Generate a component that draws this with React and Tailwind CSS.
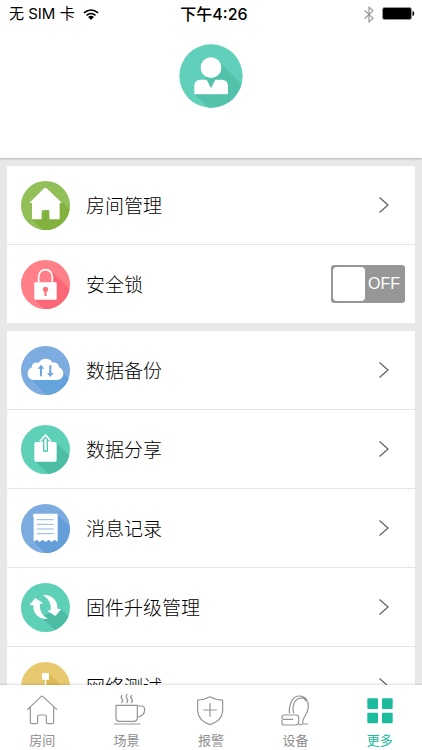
import React, { useState } from "react";

function Disc({ color, shade, id, shadow, children }) {
  return (
    <svg viewBox="0 0 147 147" className="size-[49px] shrink-0" aria-hidden="true">
      <clipPath id={id}>
        <circle cx="73.5" cy="73.5" r="73.5" />
      </clipPath>
      <circle cx="73.5" cy="73.5" r="73.5" fill={color} />
      <path d={shadow} fill={shade} clipPath={`url(#${id})`} />
      {children}
    </svg>
  );
}

const HouseDisc = () => (
  <Disc id="house" color="#93bf58" shade="#82b13d" shadow="M33 115L80 162H170V108L122 62Z">
    <path d="M69 22q4-4 8 0L123 66H116V112q0 3-3 3H85V90q0-3-3-3H65q-3 0-3 3V115H36q-3 0-3-3V66H25Z" fill="#fff" />
  </Disc>
);

const LockDisc = () => (
  <Disc id="lock" color="#ff8088" shade="#fb6776" shadow="M41 118L85 162H170V110L92 34L96 67Z">
    <path d="M53 68V49.500a20.500 20.500 0 0 1 41 0V68" fill="none" stroke="#fff" strokeWidth="5" />
    <rect x="40" y="67" width="67" height="52" rx="2" fill="#fff" />
    <circle cx="73.500" cy="88" r="8" fill="#ff727e" />
    <path d="M71 92h5l1 16h-7Z" fill="#ff727e" />
  </Disc>
);

const CloudDisc = () => (
  <Disc id="cloud" color="#7cace0" shade="#64a3dc" shadow="M27 97L92 162H170V124L124 78Z">
    <path d="M39 102C28 102 20 94 20 83C20 73 26 66 33 64C31 53 43 46 52 51C61 34 87 34 95 50C106 48 114 55 114 64C121 66 127 73 127 83C127 94 118 102 107 102Z" fill="#fff" />
    <g fill="#6fa5dc">
      <path d="M60 56L70 68H63V91H57V68H50Z" />
      <path d="M88 93L78 81H85V58H91V81H98Z" />
    </g>
  </Disc>
);

const ShareDisc = () => (
  <Disc id="share" color="#5fd0b8" shade="#4bbda5" shadow="M42 108L92 158H170V114L107 54Z">
    <rect x="40" y="51" width="67" height="59" rx="5" fill="#fff" />
    <path d="M73.500 28L91 48H82V53H65V48H56Z" fill="#fff" stroke="#fff" strokeWidth="3" strokeLinejoin="round" />
    <path d="M73.500 37L82 46H79V78H68V46H65Z" fill="#fff" stroke="#55c8b0" strokeWidth="4" />
  </Disc>
);

const ReceiptDisc = () => (
  <Disc id="receipt" color="#7cacdf" shade="#649fd9" shadow="M38 112L82 156H170V90L110 32Z">
    <path d="M38 38H36V33q0-4 4-4H106q4 0 4 4V114L101 107L92 114L83 107L74 114L65 107L56 114L47 107L38 114Z" fill="#fff" />
    <path d="M47 47H98M47 61H98M47 75H98M47 89H98" stroke="#78a8dc" strokeWidth="2.500" />
  </Disc>
);

const RefreshDisc = () => (
  <Disc id="refresh" color="#5fd0b8" shade="#4bbda5" shadow="M62 102L116 156H170V122L116 76Z">
    <path d="M25 66L43 45L67 61L57 63C54 80 63 97 81 108C57 111 35 94 37 67Z" fill="#fff" />
    <path d="M25 66L43 45L67 61L57 63C54 80 63 97 81 108C57 111 35 94 37 67Z" fill="#fff" transform="rotate(180 73 72)" />
  </Disc>
);

const NetworkDisc = () => (
  <Disc id="network" color="#e9c970" shade="#dfba55" shadow="M64 53L150 139L160 110L84 34Z">
    <path d="M63 33H84V53H63ZM71.500 53H76V80H71.500ZM38 80H109V84H38ZM30 88H50V108H30ZM63 88H84V108H63ZM98 88H118V108H98Z" fill="#fff" />
  </Disc>
);

function Chevron() {
  return (
    <svg viewBox="0 0 10 16" className="mr-4 h-4 w-[10px] shrink-0" fill="none" stroke="#666" strokeWidth="1.300" aria-hidden="true">
      <path d="M0.500 0.500L9 8L0.500 15.500" />
    </svg>
  );
}

function Row({ icon, label }) {
  return (
    <li className="border-b border-[#e4e5e7] last:border-b-0">
      <a href="#" className="flex h-[78px] items-center gap-4 pr-[10px] pl-[14px]">
        {icon}
        <span className="flex-1 text-[19px] leading-7 font-light">{label}</span>
        <Chevron />
      </a>
    </li>
  );
}

function LockRow() {
  const [on, setOn] = useState(false);
  return (
    <li>
      <label className="flex h-[78px] cursor-pointer items-center gap-4 pr-[10px] pl-[14px]">
        <LockDisc />
        <span className="flex-1 text-[19px] leading-7 font-light">安全锁</span>
        <input type="checkbox" className="peer sr-only" checked={on} onChange={(e) => setOn(e.target.checked)} />
        <span className="flex h-[38px] w-[74px] items-center rounded-[3px] bg-[#979797] p-[2px] peer-checked:flex-row-reverse peer-checked:bg-[#1abc9c]">
          <span className="h-[34px] w-8 shrink-0 rounded-[4px] bg-white" />
          <span className="flex-1 text-center font-['Liberation_Sans',Arial,sans-serif] text-base text-white">{on ? "ON" : "OFF"}</span>
        </span>
      </label>
    </li>
  );
}

const RoomIcon = () => (
  <>
    <path d="M84 209L124 171q3-3 6 0L171 209M92 204V247q0 5 5 5H109q5 0 5-5V230q0-4 4-4H136q4 0 4 4V247q0 5 5 5H157q5 0 5-5V204" />
  </>
);

const SceneIcon = () => (
  <>
    <path d="M347 197H411V234q0 11-11 11H358q-11 0-11-11ZM411 199H421q12 0 12 11q0 19-22 22M342 253H419" />
    <path d="M365 167q-5 5 0 11t-1 11M380 164q-5 6 0 13t-1 12M394 167q-5 5 0 11t-1 11" />
  </>
);

const AlarmIcon = () => (
  <>
    <path d="M630 171Q612 181 593 181V214Q595 243 630 255Q666 243 668 214V181Q648 181 630 171Z" />
    <path d="M630 192V230M611 211H649" />
  </>
);

const DeviceIcon = () => (
  <>
    <path d="M246 239H219q-5 0-5-5V231q0-5 5-5H256q8 0 8 8V247q0 9-9 9H221q-7 0-7-7V242" />
    <path d="M236 220C235 197 242 169 267 169C287 169 293 186 293 201C293 222 273 235 276 253H291M249 220C243 197 253 177 267 176C276 173 283 177 286 184M267 255H272" />
  </>
);

const MoreIcon = () => (
  <g fill="#1abc9c" stroke="none">
    <rect x="468" y="176" width="32" height="32" rx="3" />
    <rect x="512" y="176" width="32" height="32" rx="3" />
    <rect x="468" y="219" width="32" height="32" rx="3" />
    <rect x="512" y="219" width="32" height="32" rx="3" />
  </g>
);

const tabs = [
  { label: "房间", box: "67 160 120 96", Icon: RoomIcon },
  { label: "场景", box: "320 160 120 96", Icon: SceneIcon },
  { label: "报警", box: "573 160 120 96", Icon: AlarmIcon },
  { label: "设备", box: "193 160 120 96", Icon: DeviceIcon },
  { label: "更多", box: "446 160 120 96", Icon: MoreIcon, active: true },
];

function StatusBar() {
  return (
    <div className="grid h-7 grid-cols-[1fr_auto_1fr] items-center pr-[7px] pl-[9px] font-['Inter','Noto_Sans_CJK_SC',sans-serif] text-[15px]">
      <div className="flex items-center gap-2">
        <span>无 SIM 卡</span>
        <svg viewBox="0 0 48 34" className="h-[11px] w-4" fill="none" stroke="#000" strokeWidth="5" aria-hidden="true">
          <path d="M2 12Q24-6 46 12M10 20Q24 8 38 20" />
          <path d="M15 25Q24 17 33 25L24 34Z" fill="#000" stroke="none" />
        </svg>
      </div>
      <time className="pl-1 text-base font-medium">下午4:26</time>
      <div className="flex items-center justify-end gap-2">
        <svg viewBox="0 0 30 50" className="h-[17px] w-[10px]" fill="none" stroke="#999" strokeWidth="3.500" aria-hidden="true">
          <path d="M2 13L27 36L15 47V3L27 14L2 37" />
        </svg>
        <svg viewBox="0 0 33 14" className="h-[14px] w-[33px]" aria-hidden="true">
          <rect x="0.500" y="0.500" width="29" height="12" rx="2" fill="#000" stroke="#999" />
          <path d="M31 4.500q2 2 0 4Z" fill="#000" stroke="#000" />
        </svg>
      </div>
    </div>
  );
}

export default function App() {
  return (
    <div className="flex h-screen flex-col bg-[#e7e8ea] font-['Noto_Sans_CJK_SC',sans-serif] text-black">
      <header className="relative shrink-0 bg-white shadow-[0_1px_2px_rgba(0,0,0,0.22)]">
        <StatusBar />
        <div className="flex justify-center pt-4 pb-[50px]">
          <svg viewBox="0 0 192 192" className="size-16" role="img" aria-label="头像">
            <clipPath id="avatar">
              <circle cx="96" cy="96" r="95" />
            </clipPath>
            <circle cx="96" cy="96" r="95" fill="#60d0bb" />
            <path d="M46 149L100 203H200V132L118 50Z" fill="#52c2ab" clipPath="url(#avatar)" />
            <circle cx="96" cy="71" r="31" fill="#fff" />
            <path d="M46 151V126Q46 108 64 107H83L96 133L109 107H128Q147 108 147 126V148q0 3-3 3Z" fill="#fff" />
          </svg>
        </div>
      </header>

      <main className="flex min-h-0 flex-1 flex-col gap-2 overflow-y-auto px-[7px] pt-2 [scrollbar-width:none]">
        <ul className="shrink-0 bg-white">
          <Row icon={<HouseDisc />} label="房间管理" />
          <LockRow />
        </ul>
        <ul className="shrink-0 bg-white">
          <Row icon={<CloudDisc />} label="数据备份" />
          <Row icon={<ShareDisc />} label="数据分享" />
          <Row icon={<ReceiptDisc />} label="消息记录" />
          <Row icon={<RefreshDisc />} label="固件升级管理" />
          <Row icon={<NetworkDisc />} label="网络测试" />
        </ul>
      </main>

      <nav className="relative grid shrink-0 grid-cols-5 bg-white shadow-[0_-1px_2px_rgba(0,0,0,0.12)]">
        {tabs.map(({ label, box, Icon, active }) => (
          <a
            key={label}
            href="#"
            aria-current={active ? "page" : undefined}
            className={`flex flex-col items-center gap-[5px] pt-2 text-[13px] leading-5 ${active ? "text-[#1abc9c]" : "text-[#8e8e8e]"}`}
          >
            <svg viewBox={box} className="h-8 w-10 overflow-visible" fill="none" stroke="#959595" strokeWidth="3.600" strokeLinecap="round" strokeLinejoin="round" aria-hidden="true">
              <Icon />
            </svg>
            <span>{label}</span>
          </a>
        ))}
      </nav>
    </div>
  );
}
